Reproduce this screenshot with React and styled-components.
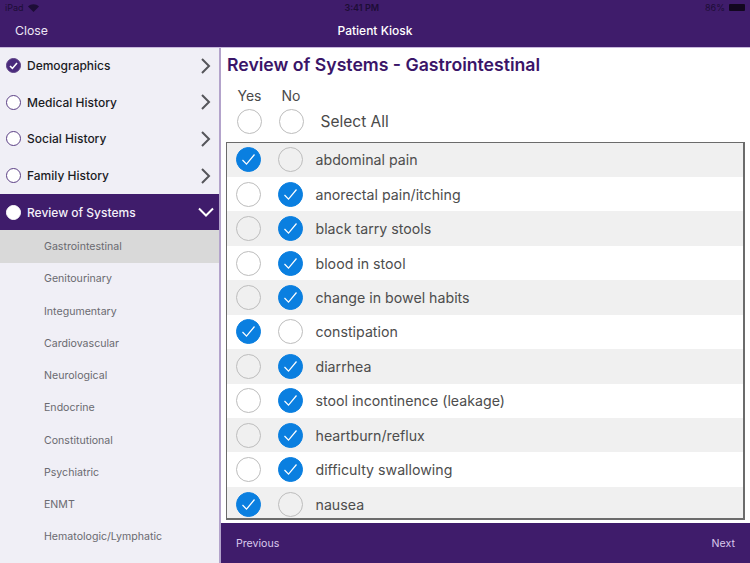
import styled, { createGlobalStyle } from 'styled-components';

const GlobalStyle = createGlobalStyle`
	html, body {
		margin: 0;
		padding: 0;
		background: #fff;
		font-family: Inter, "Liberation Sans", sans-serif;
	}
	* {
		box-sizing: border-box;
	}
`;

const purple = '#3f1c6b';

const Page = styled.div`
	width: 750px;
	height: 563px;
	display: flex;
	flex-direction: column;
	overflow: hidden;
`;

const Header = styled.header`
	height: 47.5px;
	flex: none;
	background: ${purple};
	border-bottom: 1px solid #c8b8dc;
	display: flex;
	flex-direction: column;
	color: #fff;
`;

const StatusBar = styled.div`
	height: 15px;
	padding: 0 5px;
	display: flex;
	align-items: center;
	justify-content: space-between;
	font-size: 9px;
	color: #1d0d36;
`;

const StatusGroup = styled.div`
	display: flex;
	align-items: center;
	gap: 4px;
`;

const Clock = styled.span`
	font-weight: 600;
	margin-left: -20px;
`;

const Battery = styled.span`
	display: block;
	width: 16px;
	height: 7px;
	background: #12071f;
	border-radius: 1px;
`;

const TitleBar = styled.div`
	flex: 1;
	position: relative;
	display: flex;
	align-items: center;
	justify-content: center;
	font-size: 12px;
	font-weight: 500;
	padding-bottom: 1px;
`;

const CloseLabel = styled.span`
	position: absolute;
	left: 15px;
	font-size: 12.3px;
	font-weight: 400;
	color: #ece6f4;
`;

const Body = styled.div`
	flex: 1;
	min-height: 0;
	display: flex;
`;

const Sidebar = styled.aside`
	width: 221px;
	flex: none;
	background: #f0eff6;
	border-right: 2px solid #b3a3cb;
	overflow: hidden;
`;

const NavRow = styled.div`
	height: 36.6px;
	padding: 0 5px 0 6px;
	display: flex;
	align-items: center;
	gap: 6px;
	font-size: 12px;
	font-weight: 500;
	color: ${(p) => (p.$active ? '#f4f0fa' : '#1b1b1f')};
	background: ${(p) => (p.$active ? purple : 'transparent')};
`;

const NavLabel = styled.span`
	flex: 1;
`;

const StepDot = styled.span`
	width: 15px;
	height: 15px;
	flex: none;
	border-radius: 50%;
	display: flex;
	align-items: center;
	justify-content: center;
	border: 1.5px solid ${(p) => (p.$state === 'active' ? '#fff' : '#5b3f85')};
	background: ${(p) => (p.$state === 'done' ? '#4a2a7c' : '#fff')};
`;

const SubRow = styled.div`
	height: 32.25px;
	padding-left: 44px;
	display: flex;
	align-items: center;
	font-size: 10.6px;
	color: #6a6a70;
	background: ${(p) => (p.$active ? '#d9d9d9' : 'transparent')};
`;

const Main = styled.main`
	flex: 1;
	min-width: 0;
	display: flex;
	flex-direction: column;
`;

const Content = styled.div`
	flex: 1;
	min-height: 0;
	padding: 0 5px;
	display: flex;
	flex-direction: column;
`;

const Title = styled.h1`
	margin: 0;
	height: 33px;
	padding: 6.5px 0 0 1px;
	font-size: 17.65px;
	line-height: 22px;
	font-weight: 600;
	color: #3a1568;
`;

const ColumnHeads = styled.div`
	height: 26px;
	display: flex;
	align-items: flex-end;
	padding-left: 11.5px;
	font-size: 14px;
	color: #4a4a4a;
	line-height: 22px;
`;

const ColumnHead = styled.span`
	width: 44px;
`;

const SelectAllRow = styled.div`
	height: 30px;
	margin-bottom: 5px;
	display: flex;
	align-items: center;
	padding-left: 10.5px;
	gap: 17px;
	font-size: 15.5px;
	color: #4a4a4a;
`;

const Table = styled.div`
	height: 378px;
	border: 2px solid #6b6b6b;
	border-width: 1.5px 2px 2px 1.5px;
	overflow: hidden;
`;

const Row = styled.div`
	height: 34.45px;
	display: flex;
	align-items: center;
	padding-left: 9px;
	gap: 12.5px;
	font-size: 14.2px;
	color: #4d4d4d;
	background: ${(p) => (p.$shaded ? '#f0f0f0' : '#fff')};
`;

const ChoicePair = styled.div`
	display: flex;
	gap: 17px;
`;

const Circle = styled.span`
	width: 25px;
	height: 25px;
	flex: none;
	border-radius: 50%;
	display: flex;
	align-items: center;
	justify-content: center;
	border: 1px solid ${(p) => (p.$checked ? '#0a7fe0' : '#bdbdbd')};
	background: ${(p) => (p.$checked ? '#0a7fe0' : 'transparent')};
`;

const Footer = styled.footer`
	height: 40px;
	flex: none;
	padding: 0 15px;
	background: ${purple};
	display: flex;
	align-items: center;
	justify-content: space-between;
	font-size: 10.6px;
	color: #d9c9ec;
`;

const Tick = () => (
	<svg width="15" height="13" viewBox="0 0 15 13" fill="none">
		<path d="M1.5 7l4 4.2L13.5 1.5" stroke="#fff" strokeWidth="1.2" />
	</svg>
);

const Chevron = ({ color = '#55555a', open }) => (
	<svg width="16" height="16" viewBox="0 0 16 16" fill="none">
		<path
			d={open ? 'M1 4.5l7 7 7-7' : 'M4 1l7 7-7 7'}
			stroke={color}
			strokeWidth="2"
		/>
	</svg>
);

const Wifi = () => (
	<svg width="11" height="8" viewBox="0 0 11 8" fill="#1d0d36">
		<path d="M0 2.6C3-.6 8-.6 11 2.6L5.5 8z" />
	</svg>
);

const navItems = [
	{ label: 'Demographics', state: 'done' },
	{ label: 'Medical History' },
	{ label: 'Social History' },
	{ label: 'Family History' },
];

const subItems = [
	'Gastrointestinal',
	'Genitourinary',
	'Integumentary',
	'Cardiovascular',
	'Neurological',
	'Endocrine',
	'Constitutional',
	'Psychiatric',
	'ENMT',
	'Hematologic/Lymphatic',
];

const symptoms = [
	['abdominal pain', 'yes'],
	['anorectal pain/itching', 'no'],
	['black tarry stools', 'no'],
	['blood in stool', 'no'],
	['change in bowel habits', 'no'],
	['constipation', 'yes'],
	['diarrhea', 'no'],
	['stool incontinence (leakage)', 'no'],
	['heartburn/reflux', 'no'],
	['difficulty swallowing', 'no'],
	['nausea', 'yes'],
];

const Choice = ({ checked }) => (
	<Circle $checked={checked}>{checked && <Tick />}</Circle>
);

const App = () => (
	<Page>
		<GlobalStyle />
		<Header>
			<StatusBar>
				<StatusGroup>
					iPad <Wifi />
				</StatusGroup>
				<Clock>3:41 PM</Clock>
				<StatusGroup>
					86% <Battery />
				</StatusGroup>
			</StatusBar>
			<TitleBar>
				<CloseLabel>Close</CloseLabel>
				Patient Kiosk
			</TitleBar>
		</Header>
		<Body>
			<Sidebar>
				{navItems.map((item) => (
					<NavRow key={item.label}>
						<StepDot $state={item.state}>
							{item.state === 'done' && (
								<svg width="9" height="8" viewBox="0 0 9 8" fill="none">
									<path d="M1 4l2.4 2.4L8 1" stroke="#fff" strokeWidth="1.6" />
								</svg>
							)}
						</StepDot>
						<NavLabel>{item.label}</NavLabel>
						<Chevron />
					</NavRow>
				))}
				<NavRow $active>
					<StepDot $state="active" />
					<NavLabel>Review of Systems</NavLabel>
					<Chevron open color="#fff" />
				</NavRow>
				{subItems.map((item, i) => (
					<SubRow key={item} $active={i === 0}>
						{item}
					</SubRow>
				))}
			</Sidebar>
			<Main>
				<Content>
					<Title>Review of Systems - Gastrointestinal</Title>
					<ColumnHeads>
						<ColumnHead>Yes</ColumnHead>
						<ColumnHead>No</ColumnHead>
					</ColumnHeads>
					<SelectAllRow>
						<Choice />
						<Choice />
						<span>Select All</span>
					</SelectAllRow>
					<Table>
						{symptoms.map(([label, answer], i) => (
							<Row key={label} $shaded={i % 2 === 0}>
								<ChoicePair>
									<Choice checked={answer === 'yes'} />
									<Choice checked={answer === 'no'} />
								</ChoicePair>
								<span>{label}</span>
							</Row>
						))}
					</Table>
				</Content>
				<Footer>
					<span>Previous</span>
					<span>Next</span>
				</Footer>
			</Main>
		</Body>
	</Page>
);

export default App;
